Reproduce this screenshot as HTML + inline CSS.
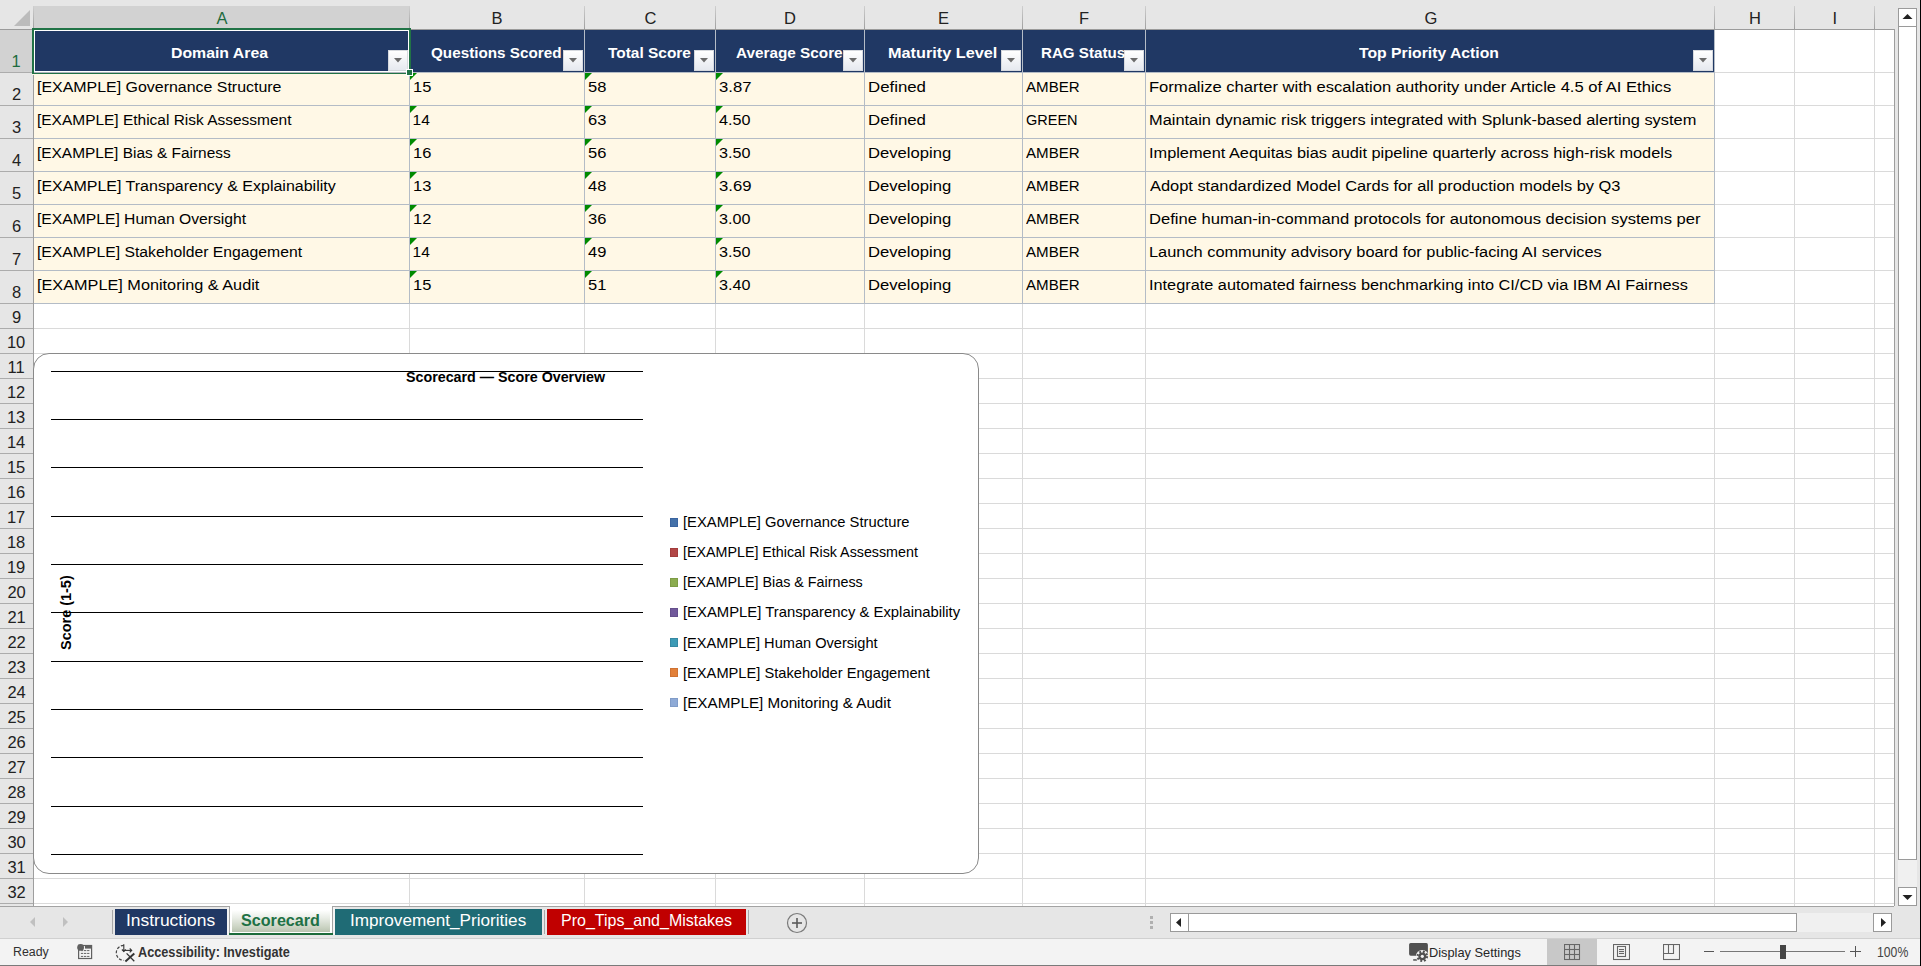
<!DOCTYPE html>
<html><head><meta charset="utf-8"><style>
html,body{margin:0;padding:0;width:1921px;height:966px;overflow:hidden;background:#fff;}
body{position:relative;font-family:"Liberation Sans", sans-serif;}
div{box-sizing:content-box;}
</style></head><body>
<div style="position:absolute;left:0px;top:0px;width:1921px;height:966px;background:#ffffff;"></div>
<div style="position:absolute;left:0px;top:0px;width:1921px;height:30px;background:#e6e6e6;"></div>
<div style="position:absolute;left:1894px;top:0px;width:27px;height:906px;background:#e6e6e6;"></div>
<div style="position:absolute;left:0px;top:29px;width:33px;height:877px;background:#e6e6e6;"></div>
<div style="position:absolute;left:34px;top:6px;width:375px;height:23px;background:#d2d2d2;"></div>
<div style="position:absolute;left:0px;top:30px;width:33px;height:42px;background:#d2d2d2;"></div>
<svg style="position:absolute;left:0;top:0" width="33" height="29"><polygon points="30,10 30,26 14,26" fill="#bcbcbc"/></svg>
<div style="position:absolute;left:409px;top:29px;width:1px;height:877px;background:#dadada;"></div>
<div style="position:absolute;left:584px;top:29px;width:1px;height:877px;background:#dadada;"></div>
<div style="position:absolute;left:715px;top:29px;width:1px;height:877px;background:#dadada;"></div>
<div style="position:absolute;left:864px;top:29px;width:1px;height:877px;background:#dadada;"></div>
<div style="position:absolute;left:1022px;top:29px;width:1px;height:877px;background:#dadada;"></div>
<div style="position:absolute;left:1145px;top:29px;width:1px;height:877px;background:#dadada;"></div>
<div style="position:absolute;left:1714px;top:29px;width:1px;height:877px;background:#dadada;"></div>
<div style="position:absolute;left:1794px;top:29px;width:1px;height:877px;background:#dadada;"></div>
<div style="position:absolute;left:1874px;top:29px;width:1px;height:877px;background:#dadada;"></div>
<div style="position:absolute;left:33px;top:328px;width:1861px;height:1px;background:#dadada;"></div>
<div style="position:absolute;left:33px;top:353px;width:1861px;height:1px;background:#dadada;"></div>
<div style="position:absolute;left:33px;top:378px;width:1861px;height:1px;background:#dadada;"></div>
<div style="position:absolute;left:33px;top:403px;width:1861px;height:1px;background:#dadada;"></div>
<div style="position:absolute;left:33px;top:428px;width:1861px;height:1px;background:#dadada;"></div>
<div style="position:absolute;left:33px;top:453px;width:1861px;height:1px;background:#dadada;"></div>
<div style="position:absolute;left:33px;top:478px;width:1861px;height:1px;background:#dadada;"></div>
<div style="position:absolute;left:33px;top:503px;width:1861px;height:1px;background:#dadada;"></div>
<div style="position:absolute;left:33px;top:528px;width:1861px;height:1px;background:#dadada;"></div>
<div style="position:absolute;left:33px;top:553px;width:1861px;height:1px;background:#dadada;"></div>
<div style="position:absolute;left:33px;top:578px;width:1861px;height:1px;background:#dadada;"></div>
<div style="position:absolute;left:33px;top:603px;width:1861px;height:1px;background:#dadada;"></div>
<div style="position:absolute;left:33px;top:628px;width:1861px;height:1px;background:#dadada;"></div>
<div style="position:absolute;left:33px;top:653px;width:1861px;height:1px;background:#dadada;"></div>
<div style="position:absolute;left:33px;top:678px;width:1861px;height:1px;background:#dadada;"></div>
<div style="position:absolute;left:33px;top:703px;width:1861px;height:1px;background:#dadada;"></div>
<div style="position:absolute;left:33px;top:728px;width:1861px;height:1px;background:#dadada;"></div>
<div style="position:absolute;left:33px;top:753px;width:1861px;height:1px;background:#dadada;"></div>
<div style="position:absolute;left:33px;top:778px;width:1861px;height:1px;background:#dadada;"></div>
<div style="position:absolute;left:33px;top:803px;width:1861px;height:1px;background:#dadada;"></div>
<div style="position:absolute;left:33px;top:828px;width:1861px;height:1px;background:#dadada;"></div>
<div style="position:absolute;left:33px;top:853px;width:1861px;height:1px;background:#dadada;"></div>
<div style="position:absolute;left:33px;top:878px;width:1861px;height:1px;background:#dadada;"></div>
<div style="position:absolute;left:33px;top:903px;width:1861px;height:1px;background:#dadada;"></div>
<div style="position:absolute;left:1714px;top:72px;width:180px;height:1px;background:#dadada;"></div>
<div style="position:absolute;left:1714px;top:105px;width:180px;height:1px;background:#dadada;"></div>
<div style="position:absolute;left:1714px;top:138px;width:180px;height:1px;background:#dadada;"></div>
<div style="position:absolute;left:1714px;top:171px;width:180px;height:1px;background:#dadada;"></div>
<div style="position:absolute;left:1714px;top:204px;width:180px;height:1px;background:#dadada;"></div>
<div style="position:absolute;left:1714px;top:237px;width:180px;height:1px;background:#dadada;"></div>
<div style="position:absolute;left:1714px;top:270px;width:180px;height:1px;background:#dadada;"></div>
<div style="position:absolute;left:1714px;top:303px;width:180px;height:1px;background:#dadada;"></div>
<div style="position:absolute;left:409px;top:6px;width:1px;height:23px;background:linear-gradient(#cfcfcf,#9f9f9f);"></div>
<div style="position:absolute;left:584px;top:6px;width:1px;height:23px;background:linear-gradient(#cfcfcf,#9f9f9f);"></div>
<div style="position:absolute;left:715px;top:6px;width:1px;height:23px;background:linear-gradient(#cfcfcf,#9f9f9f);"></div>
<div style="position:absolute;left:864px;top:6px;width:1px;height:23px;background:linear-gradient(#cfcfcf,#9f9f9f);"></div>
<div style="position:absolute;left:1022px;top:6px;width:1px;height:23px;background:linear-gradient(#cfcfcf,#9f9f9f);"></div>
<div style="position:absolute;left:1145px;top:6px;width:1px;height:23px;background:linear-gradient(#cfcfcf,#9f9f9f);"></div>
<div style="position:absolute;left:1714px;top:6px;width:1px;height:23px;background:linear-gradient(#cfcfcf,#9f9f9f);"></div>
<div style="position:absolute;left:1794px;top:6px;width:1px;height:23px;background:linear-gradient(#cfcfcf,#9f9f9f);"></div>
<div style="position:absolute;left:1874px;top:6px;width:1px;height:23px;background:linear-gradient(#cfcfcf,#9f9f9f);"></div>
<div style="position:absolute;left:33px;top:6px;width:1px;height:23px;background:linear-gradient(#cfcfcf,#9f9f9f);"></div>
<div style="position:absolute;left:0px;top:29px;width:1894px;height:1px;background:#9b9b9b;"></div>
<div style="position:absolute;left:33px;top:29px;width:1px;height:877px;background:#9e9e9e;"></div>
<div style="position:absolute;left:0px;top:72px;width:33px;height:1px;background:#acacac;"></div>
<div style="position:absolute;left:0px;top:105px;width:33px;height:1px;background:#acacac;"></div>
<div style="position:absolute;left:0px;top:138px;width:33px;height:1px;background:#acacac;"></div>
<div style="position:absolute;left:0px;top:171px;width:33px;height:1px;background:#acacac;"></div>
<div style="position:absolute;left:0px;top:204px;width:33px;height:1px;background:#acacac;"></div>
<div style="position:absolute;left:0px;top:237px;width:33px;height:1px;background:#acacac;"></div>
<div style="position:absolute;left:0px;top:270px;width:33px;height:1px;background:#acacac;"></div>
<div style="position:absolute;left:0px;top:303px;width:33px;height:1px;background:#acacac;"></div>
<div style="position:absolute;left:0px;top:328px;width:33px;height:1px;background:#acacac;"></div>
<div style="position:absolute;left:0px;top:353px;width:33px;height:1px;background:#acacac;"></div>
<div style="position:absolute;left:0px;top:378px;width:33px;height:1px;background:#acacac;"></div>
<div style="position:absolute;left:0px;top:403px;width:33px;height:1px;background:#acacac;"></div>
<div style="position:absolute;left:0px;top:428px;width:33px;height:1px;background:#acacac;"></div>
<div style="position:absolute;left:0px;top:453px;width:33px;height:1px;background:#acacac;"></div>
<div style="position:absolute;left:0px;top:478px;width:33px;height:1px;background:#acacac;"></div>
<div style="position:absolute;left:0px;top:503px;width:33px;height:1px;background:#acacac;"></div>
<div style="position:absolute;left:0px;top:528px;width:33px;height:1px;background:#acacac;"></div>
<div style="position:absolute;left:0px;top:553px;width:33px;height:1px;background:#acacac;"></div>
<div style="position:absolute;left:0px;top:578px;width:33px;height:1px;background:#acacac;"></div>
<div style="position:absolute;left:0px;top:603px;width:33px;height:1px;background:#acacac;"></div>
<div style="position:absolute;left:0px;top:628px;width:33px;height:1px;background:#acacac;"></div>
<div style="position:absolute;left:0px;top:653px;width:33px;height:1px;background:#acacac;"></div>
<div style="position:absolute;left:0px;top:678px;width:33px;height:1px;background:#acacac;"></div>
<div style="position:absolute;left:0px;top:703px;width:33px;height:1px;background:#acacac;"></div>
<div style="position:absolute;left:0px;top:728px;width:33px;height:1px;background:#acacac;"></div>
<div style="position:absolute;left:0px;top:753px;width:33px;height:1px;background:#acacac;"></div>
<div style="position:absolute;left:0px;top:778px;width:33px;height:1px;background:#acacac;"></div>
<div style="position:absolute;left:0px;top:803px;width:33px;height:1px;background:#acacac;"></div>
<div style="position:absolute;left:0px;top:828px;width:33px;height:1px;background:#acacac;"></div>
<div style="position:absolute;left:0px;top:853px;width:33px;height:1px;background:#acacac;"></div>
<div style="position:absolute;left:0px;top:878px;width:33px;height:1px;background:#acacac;"></div>
<div style="position:absolute;left:0px;top:903px;width:33px;height:1px;background:#acacac;"></div>
<div style="position:absolute;left:1894px;top:29px;width:1px;height:878px;background:#9e9e9e;"></div>
<div style="position:absolute;left:34px;top:30px;width:1680px;height:42px;background:#203864;"></div>
<div style="position:absolute;left:34px;top:73px;width:1680px;height:230px;background:#fff8e6;"></div>
<div style="position:absolute;left:34px;top:72px;width:1680px;height:1px;background:#b4bcc6;"></div>
<div style="position:absolute;left:34px;top:105px;width:1680px;height:1px;background:#b4bcc6;"></div>
<div style="position:absolute;left:34px;top:138px;width:1680px;height:1px;background:#b4bcc6;"></div>
<div style="position:absolute;left:34px;top:171px;width:1680px;height:1px;background:#b4bcc6;"></div>
<div style="position:absolute;left:34px;top:204px;width:1680px;height:1px;background:#b4bcc6;"></div>
<div style="position:absolute;left:34px;top:237px;width:1680px;height:1px;background:#b4bcc6;"></div>
<div style="position:absolute;left:34px;top:270px;width:1680px;height:1px;background:#b4bcc6;"></div>
<div style="position:absolute;left:34px;top:303px;width:1680px;height:1px;background:#b4bcc6;"></div>
<div style="position:absolute;left:409px;top:30px;width:1px;height:274px;background:#b4bcc6;"></div>
<div style="position:absolute;left:584px;top:30px;width:1px;height:274px;background:#b4bcc6;"></div>
<div style="position:absolute;left:715px;top:30px;width:1px;height:274px;background:#b4bcc6;"></div>
<div style="position:absolute;left:864px;top:30px;width:1px;height:274px;background:#b4bcc6;"></div>
<div style="position:absolute;left:1022px;top:30px;width:1px;height:274px;background:#b4bcc6;"></div>
<div style="position:absolute;left:1145px;top:30px;width:1px;height:274px;background:#b4bcc6;"></div>
<div style="position:absolute;left:1714px;top:30px;width:1px;height:274px;background:#b4bcc6;"></div>
<div style="position:absolute;left:388px;top:50px;width:18px;height:19px;border:1px solid #d6d9de;background:linear-gradient(#ffffff,#e6e9ef);"></div>
<svg style="position:absolute;left:394px;top:58px" width="8" height="5"><polygon points="0,0 8,0 4,4.5" fill="#6b6b6b"/></svg>
<div style="position:absolute;left:563px;top:50px;width:18px;height:19px;border:1px solid #d6d9de;background:linear-gradient(#ffffff,#e6e9ef);"></div>
<svg style="position:absolute;left:569px;top:58px" width="8" height="5"><polygon points="0,0 8,0 4,4.5" fill="#6b6b6b"/></svg>
<div style="position:absolute;left:694px;top:50px;width:18px;height:19px;border:1px solid #d6d9de;background:linear-gradient(#ffffff,#e6e9ef);"></div>
<svg style="position:absolute;left:700px;top:58px" width="8" height="5"><polygon points="0,0 8,0 4,4.5" fill="#6b6b6b"/></svg>
<div style="position:absolute;left:843px;top:50px;width:18px;height:19px;border:1px solid #d6d9de;background:linear-gradient(#ffffff,#e6e9ef);"></div>
<svg style="position:absolute;left:849px;top:58px" width="8" height="5"><polygon points="0,0 8,0 4,4.5" fill="#6b6b6b"/></svg>
<div style="position:absolute;left:1001px;top:50px;width:18px;height:19px;border:1px solid #d6d9de;background:linear-gradient(#ffffff,#e6e9ef);"></div>
<svg style="position:absolute;left:1007px;top:58px" width="8" height="5"><polygon points="0,0 8,0 4,4.5" fill="#6b6b6b"/></svg>
<div style="position:absolute;left:1124px;top:50px;width:18px;height:19px;border:1px solid #d6d9de;background:linear-gradient(#ffffff,#e6e9ef);"></div>
<svg style="position:absolute;left:1130px;top:58px" width="8" height="5"><polygon points="0,0 8,0 4,4.5" fill="#6b6b6b"/></svg>
<div style="position:absolute;left:1693px;top:50px;width:18px;height:19px;border:1px solid #d6d9de;background:linear-gradient(#ffffff,#e6e9ef);"></div>
<svg style="position:absolute;left:1699px;top:58px" width="8" height="5"><polygon points="0,0 8,0 4,4.5" fill="#6b6b6b"/></svg>
<svg style="position:absolute;left:410px;top:73px" width="7" height="7"><polygon points="0,0 7,0 0,7" fill="#008a00"/></svg>
<svg style="position:absolute;left:585px;top:73px" width="7" height="7"><polygon points="0,0 7,0 0,7" fill="#008a00"/></svg>
<svg style="position:absolute;left:716px;top:73px" width="7" height="7"><polygon points="0,0 7,0 0,7" fill="#008a00"/></svg>
<svg style="position:absolute;left:410px;top:106px" width="7" height="7"><polygon points="0,0 7,0 0,7" fill="#008a00"/></svg>
<svg style="position:absolute;left:585px;top:106px" width="7" height="7"><polygon points="0,0 7,0 0,7" fill="#008a00"/></svg>
<svg style="position:absolute;left:716px;top:106px" width="7" height="7"><polygon points="0,0 7,0 0,7" fill="#008a00"/></svg>
<svg style="position:absolute;left:410px;top:139px" width="7" height="7"><polygon points="0,0 7,0 0,7" fill="#008a00"/></svg>
<svg style="position:absolute;left:585px;top:139px" width="7" height="7"><polygon points="0,0 7,0 0,7" fill="#008a00"/></svg>
<svg style="position:absolute;left:716px;top:139px" width="7" height="7"><polygon points="0,0 7,0 0,7" fill="#008a00"/></svg>
<svg style="position:absolute;left:410px;top:172px" width="7" height="7"><polygon points="0,0 7,0 0,7" fill="#008a00"/></svg>
<svg style="position:absolute;left:585px;top:172px" width="7" height="7"><polygon points="0,0 7,0 0,7" fill="#008a00"/></svg>
<svg style="position:absolute;left:716px;top:172px" width="7" height="7"><polygon points="0,0 7,0 0,7" fill="#008a00"/></svg>
<svg style="position:absolute;left:410px;top:205px" width="7" height="7"><polygon points="0,0 7,0 0,7" fill="#008a00"/></svg>
<svg style="position:absolute;left:585px;top:205px" width="7" height="7"><polygon points="0,0 7,0 0,7" fill="#008a00"/></svg>
<svg style="position:absolute;left:716px;top:205px" width="7" height="7"><polygon points="0,0 7,0 0,7" fill="#008a00"/></svg>
<svg style="position:absolute;left:410px;top:238px" width="7" height="7"><polygon points="0,0 7,0 0,7" fill="#008a00"/></svg>
<svg style="position:absolute;left:585px;top:238px" width="7" height="7"><polygon points="0,0 7,0 0,7" fill="#008a00"/></svg>
<svg style="position:absolute;left:716px;top:238px" width="7" height="7"><polygon points="0,0 7,0 0,7" fill="#008a00"/></svg>
<svg style="position:absolute;left:410px;top:271px" width="7" height="7"><polygon points="0,0 7,0 0,7" fill="#008a00"/></svg>
<svg style="position:absolute;left:585px;top:271px" width="7" height="7"><polygon points="0,0 7,0 0,7" fill="#008a00"/></svg>
<svg style="position:absolute;left:716px;top:271px" width="7" height="7"><polygon points="0,0 7,0 0,7" fill="#008a00"/></svg>
<div style="position:absolute;left:32px;top:28px;width:375px;height:42px;border:2px solid #217346;"></div>
<div style="position:absolute;left:34px;top:30px;width:373px;height:40px;border:1px solid #ffffff;box-sizing:border-box;width:375px;height:42px;"></div>
<div style="position:absolute;left:34px;top:72px;width:375px;height:1px;background:#aeb4bb;"></div>
<div style="position:absolute;left:32px;top:73px;width:377px;height:1px;background:#217346;"></div>
<div style="position:absolute;left:32px;top:74px;width:377px;height:1px;background:#fff8e6;"></div>
<div style="position:absolute;left:406px;top:69px;width:5px;height:5px;background:#217346;border:1px solid #fff;"></div>
<div style="position:absolute;left:33px;top:353px;width:944px;height:519px;border:1.2px solid #8a8a8a;border-radius:16px;background:#fff;"></div>
<div style="position:absolute;left:51px;top:371px;width:592px;height:1px;background:#000000;"></div>
<div style="position:absolute;left:51px;top:419px;width:592px;height:1px;background:#000000;"></div>
<div style="position:absolute;left:51px;top:467px;width:592px;height:1px;background:#000000;"></div>
<div style="position:absolute;left:51px;top:516px;width:592px;height:1px;background:#000000;"></div>
<div style="position:absolute;left:51px;top:564px;width:592px;height:1px;background:#000000;"></div>
<div style="position:absolute;left:51px;top:612px;width:592px;height:1px;background:#000000;"></div>
<div style="position:absolute;left:51px;top:661px;width:592px;height:1px;background:#000000;"></div>
<div style="position:absolute;left:51px;top:709px;width:592px;height:1px;background:#000000;"></div>
<div style="position:absolute;left:51px;top:757px;width:592px;height:1px;background:#000000;"></div>
<div style="position:absolute;left:51px;top:806px;width:592px;height:1px;background:#000000;"></div>
<div style="position:absolute;left:51px;top:854px;width:592px;height:1px;background:#000000;"></div>
<div style="position:absolute;left:670px;top:518px;width:6px;height:7px;background:#4471a9;border:1px solid #3a64a0;"></div>
<div style="position:absolute;left:670px;top:548px;width:6px;height:7px;background:#b24646;border:1px solid #a23c3c;"></div>
<div style="position:absolute;left:670px;top:578px;width:6px;height:7px;background:#8bac50;border:1px solid #7d9c46;"></div>
<div style="position:absolute;left:670px;top:608px;width:6px;height:7px;background:#71599b;border:1px solid #654f8c;"></div>
<div style="position:absolute;left:670px;top:638px;width:6px;height:7px;background:#3d9bb6;border:1px solid #3689a3;"></div>
<div style="position:absolute;left:670px;top:668px;width:6px;height:7px;background:#e28039;border:1px solid #cf7232;"></div>
<div style="position:absolute;left:670px;top:698px;width:6px;height:7px;background:#8eaad6;border:1px solid #809cc8;"></div>
<div style="position:absolute;left:0px;top:906px;width:1921px;height:32px;background:#e6e6e6;"></div>
<div style="position:absolute;left:0px;top:906px;width:1894px;height:1px;background:#a3a3a3;"></div>
<div style="position:absolute;left:115px;top:909px;width:112px;height:26px;background:#203864;"></div>
<div style="position:absolute;left:335px;top:909px;width:207px;height:26px;background:#1f6b75;"></div>
<div style="position:absolute;left:547px;top:909px;width:199px;height:26px;background:#c00000;"></div>
<div style="position:absolute;left:229px;top:906px;width:104px;height:29px;background:#a3a3a3;"></div>
<div style="position:absolute;left:230px;top:906px;width:102px;height:29px;background:#ffffff;"></div>
<div style="position:absolute;left:232px;top:910px;width:98px;height:22px;background:linear-gradient(#ffffff,#e9ede6 35%,#c9d2c1 80%,#b9c3b0);"></div>
<div style="position:absolute;left:229px;top:933px;width:104px;height:2px;background:#1b6b3a;"></div>
<div style="position:absolute;left:333px;top:907px;width:2px;height:28px;background:#f4f4f4;"></div>
<div style="position:absolute;left:227px;top:907px;width:2px;height:28px;background:#f4f4f4;"></div>
<div style="position:absolute;left:112px;top:910px;width:1px;height:24px;background:#a8a8a8;"></div>
<div style="position:absolute;left:544px;top:910px;width:1px;height:24px;background:#a8a8a8;"></div>
<div style="position:absolute;left:748px;top:910px;width:1px;height:24px;background:#a8a8a8;"></div>
<svg style="position:absolute;left:25px;top:914px" width="50" height="16"><polygon points="10,3 10,13 5,8" fill="#c0c0c0"/><polygon points="38,3 38,13 43,8" fill="#c0c0c0"/></svg>
<svg style="position:absolute;left:785px;top:911px" width="24" height="24"><circle cx="12" cy="12" r="9.5" fill="none" stroke="#7a7a7a" stroke-width="1.2"/><line x1="7" y1="12" x2="17" y2="12" stroke="#5a5a5a" stroke-width="1.6"/><line x1="12" y1="7" x2="12" y2="17" stroke="#5a5a5a" stroke-width="1.6"/></svg>
<div style="position:absolute;left:1150px;top:916px;width:3px;height:3px;background:#b0b0b0;"></div>
<div style="position:absolute;left:1150px;top:921px;width:3px;height:3px;background:#b0b0b0;"></div>
<div style="position:absolute;left:1150px;top:926px;width:3px;height:3px;background:#b0b0b0;"></div>
<div style="position:absolute;left:1170px;top:913px;width:722px;height:19px;background:#f0f0f0;"></div>
<div style="position:absolute;left:1170px;top:913px;width:17px;height:17px;border:1px solid #9a9a9a;background:#fff;"></div>
<svg style="position:absolute;left:1170px;top:913px" width="19" height="19"><polygon points="11,5 11,14 6,9.5" fill="#222"/></svg>
<div style="position:absolute;left:1188px;top:913px;width:607px;height:17px;border:1px solid #9a9a9a;background:#fff;"></div>
<div style="position:absolute;left:1873px;top:913px;width:17px;height:17px;border:1px solid #9a9a9a;background:#fff;"></div>
<svg style="position:absolute;left:1873px;top:913px" width="19" height="19"><polygon points="8,5 8,14 13,9.5" fill="#222"/></svg>
<div style="position:absolute;left:1898px;top:8px;width:19px;height:898px;background:#f0f0f0;"></div>
<div style="position:absolute;left:1898px;top:8px;width:17px;height:17px;border:1px solid #9a9a9a;background:#fff;"></div>
<svg style="position:absolute;left:1898px;top:8px" width="19" height="19"><polygon points="4.5,11 14.5,11 9.5,6" fill="#222"/></svg>
<div style="position:absolute;left:1898px;top:26px;width:17px;height:832px;border:1px solid #9a9a9a;background:#fff;"></div>
<div style="position:absolute;left:1898px;top:887px;width:17px;height:17px;border:1px solid #9a9a9a;background:#fff;"></div>
<svg style="position:absolute;left:1898px;top:887px" width="19" height="19"><polygon points="4.5,8 14.5,8 9.5,13" fill="#222"/></svg>
<div style="position:absolute;left:0px;top:938px;width:1921px;height:28px;background:#f3f3f3;"></div>
<div style="position:absolute;left:0px;top:938px;width:1921px;height:1px;background:#d0d0d0;"></div>
<svg style="position:absolute;left:77px;top:944px" width="17" height="17"><rect x="1.6" y="1.5" width="13" height="13" fill="none" stroke="#606060" stroke-width="1.2"/><rect x="8" y="1" width="7" height="3.6" fill="#606060"/><circle cx="3.6" cy="3.4" r="3.4" fill="#606060"/><g fill="#707070"><rect x="3.9" y="6" width="2.3" height="1.1"/><rect x="7" y="6" width="2.3" height="1.1"/><rect x="10.1" y="6" width="2.3" height="1.1"/><rect x="3.9" y="8.9" width="2.3" height="1.1"/><rect x="7" y="8.9" width="2.3" height="1.1"/><rect x="10.1" y="8.9" width="2.3" height="1.1"/><rect x="3.9" y="11.9" width="2.3" height="1.1"/><rect x="7" y="11.9" width="2.3" height="1.1"/><rect x="10.1" y="11.9" width="2.3" height="1.1"/></g></svg>
<svg style="position:absolute;left:115px;top:943px" width="22" height="21"><path d="M8.8 2.3 A7.5 7.5 0 0 0 8.8 17.3" fill="none" stroke="#444" stroke-width="1.2" stroke-dasharray="3 1.6"/><g fill="none" stroke="#333" stroke-width="1.1"><line x1="8.8" y1="1.2" x2="8.8" y2="8.4"/><polyline points="6.9,6.5 8.8,8.5 10.7,6.5"/><line x1="8.8" y1="7.4" x2="16.6" y2="7.4"/><polyline points="14.7,5.5 16.7,7.4 14.7,9.3"/></g><line x1="10.4" y1="18.4" x2="19.3" y2="10.4" stroke="#333" stroke-width="2"/><line x1="11.6" y1="10.4" x2="19.3" y2="18.3" stroke="#333" stroke-width="1.3"/></svg>
<svg style="position:absolute;left:1409px;top:943px" width="21" height="21"><rect x="0.1" y="0.1" width="18.8" height="12.6" rx="1.6" fill="#505050"/><rect x="4.2" y="16.2" width="3.7" height="1.5" fill="#505050"/><circle cx="13.3" cy="13.3" r="6.4" fill="#f3f3f3"/><circle cx="13.3" cy="13.3" r="3.9" fill="#505050"/><circle cx="13.3" cy="13.3" r="4.7" fill="none" stroke="#505050" stroke-width="2.2" stroke-dasharray="1.85 1.84"/><circle cx="13.3" cy="13.3" r="1.6" fill="#f3f3f3"/></svg>
<div style="position:absolute;left:1547px;top:939px;width:50px;height:27px;background:#c8c8c8;"></div>
<svg style="position:absolute;left:1564px;top:944px" width="17" height="17"><g fill="none" stroke="#666" stroke-width="1.1"><rect x="0.5" y="0.5" width="15" height="15"/><line x1="5.5" y1="0" x2="5.5" y2="16"/><line x1="10.5" y1="0" x2="10.5" y2="16"/><line x1="0" y1="5.5" x2="16" y2="5.5"/><line x1="0" y1="10.5" x2="16" y2="10.5"/></g></svg>
<svg style="position:absolute;left:1613px;top:944px" width="17" height="17"><g fill="none" stroke="#666" stroke-width="1.1"><rect x="0.5" y="0.5" width="16" height="15"/><rect x="4.5" y="2.5" width="8" height="10"/><line x1="6" y1="5.5" x2="11" y2="5.5"/><line x1="6" y1="7.5" x2="11" y2="7.5"/><line x1="6" y1="9.5" x2="11" y2="9.5"/></g></svg>
<svg style="position:absolute;left:1663px;top:944px" width="17" height="17"><g fill="none" stroke="#666" stroke-width="1.1"><rect x="0.5" y="0.5" width="16" height="15"/><polyline points="0.5,9.5 10.5,9.5 10.5,0"/><line x1="5.5" y1="0" x2="5.5" y2="9.5"/></g></svg>
<div style="position:absolute;left:1704px;top:951px;width:10px;height:1px;background:#555;"></div>
<div style="position:absolute;left:1720px;top:951px;width:125px;height:1px;background:#777;"></div>
<div style="position:absolute;left:1780px;top:945px;width:6px;height:14px;background:#444;"></div>
<div style="position:absolute;left:1850px;top:951px;width:11px;height:1px;background:#555;"></div>
<div style="position:absolute;left:1855px;top:946px;width:1px;height:11px;background:#555;"></div>
<div style="position:absolute;left:0px;top:965px;width:1921px;height:1px;background:#7a7a7a;"></div>
<div style="position:absolute;left:1920px;top:0px;width:1px;height:966px;background:#000000;"></div>
<div style="position:absolute;left:171.48px;top:43.13px;font-size:15.5px;line-height:19px;font-weight:bold;color:#ffffff;white-space:pre;transform:scaleX(1.0212);transform-origin:0 0;">Domain Area</div>
<div style="position:absolute;left:431.30px;top:43.13px;font-size:15.5px;line-height:19px;font-weight:bold;color:#ffffff;white-space:pre;transform:scaleX(0.9835);transform-origin:0 0;">Questions Scored</div>
<div style="position:absolute;left:608.30px;top:43.13px;font-size:15.5px;line-height:19px;font-weight:bold;color:#ffffff;white-space:pre;transform:scaleX(0.9959);transform-origin:0 0;">Total Score</div>
<div style="position:absolute;left:736.00px;top:43.13px;font-size:15.5px;line-height:19px;font-weight:bold;color:#ffffff;white-space:pre;transform:scaleX(0.9874);transform-origin:0 0;">Average Score</div>
<div style="position:absolute;left:888.35px;top:43.13px;font-size:15.5px;line-height:19px;font-weight:bold;color:#ffffff;white-space:pre;transform:scaleX(1.0494);transform-origin:0 0;">Maturity Level</div>
<div style="position:absolute;left:1041.22px;top:43.13px;font-size:15.5px;line-height:19px;font-weight:bold;color:#ffffff;white-space:pre;transform:scaleX(0.9763);transform-origin:0 0;">RAG Status</div>
<div style="position:absolute;left:1359.20px;top:43.13px;font-size:15.5px;line-height:19px;font-weight:bold;color:#ffffff;white-space:pre;transform:scaleX(1.0154);transform-origin:0 0;">Top Priority Action</div>
<div style="position:absolute;left:36.77px;top:77.13px;font-size:15.5px;line-height:19px;font-weight:normal;color:#000;white-space:pre;transform:scaleX(1.0281);transform-origin:0 0;">[EXAMPLE] Governance Structure</div>
<div style="position:absolute;left:412.54px;top:77.13px;font-size:15.5px;line-height:19px;font-weight:normal;color:#000;white-space:pre;transform:scaleX(1.0627);transform-origin:0 0;">15</div>
<div style="position:absolute;left:588.20px;top:77.13px;font-size:15.5px;line-height:19px;font-weight:normal;color:#000;white-space:pre;transform:scaleX(1.0650);transform-origin:0 0;">58</div>
<div style="position:absolute;left:719.20px;top:77.13px;font-size:15.5px;line-height:19px;font-weight:normal;color:#000;white-space:pre;transform:scaleX(1.0762);transform-origin:0 0;">3.87</div>
<div style="position:absolute;left:867.52px;top:77.13px;font-size:15.5px;line-height:19px;font-weight:normal;color:#000;white-space:pre;transform:scaleX(1.0848);transform-origin:0 0;">Defined</div>
<div style="position:absolute;left:1026.40px;top:77.13px;font-size:15.5px;line-height:19px;font-weight:normal;color:#000;white-space:pre;transform:scaleX(0.9740);transform-origin:0 0;">AMBER</div>
<div style="position:absolute;left:1148.63px;top:77.13px;font-size:15.5px;line-height:19px;font-weight:normal;color:#000;white-space:pre;transform:scaleX(1.0690);transform-origin:0 0;">Formalize charter with escalation authority under Article 4.5 of AI Ethics</div>
<div style="position:absolute;left:36.80px;top:110.13px;font-size:15.5px;line-height:19px;font-weight:normal;color:#000;white-space:pre;transform:scaleX(0.9979);transform-origin:0 0;">[EXAMPLE] Ethical Risk Assessment</div>
<div style="position:absolute;left:412.60px;top:110.13px;font-size:15.5px;line-height:19px;font-weight:normal;color:#000;white-space:pre;">14</div>
<div style="position:absolute;left:588.20px;top:110.13px;font-size:15.5px;line-height:19px;font-weight:normal;color:#000;white-space:pre;transform:scaleX(1.0650);transform-origin:0 0;">63</div>
<div style="position:absolute;left:719.20px;top:110.13px;font-size:15.5px;line-height:19px;font-weight:normal;color:#000;white-space:pre;transform:scaleX(1.0410);transform-origin:0 0;">4.50</div>
<div style="position:absolute;left:867.52px;top:110.13px;font-size:15.5px;line-height:19px;font-weight:normal;color:#000;white-space:pre;transform:scaleX(1.0848);transform-origin:0 0;">Defined</div>
<div style="position:absolute;left:1026.40px;top:110.13px;font-size:15.5px;line-height:19px;font-weight:normal;color:#000;white-space:pre;transform:scaleX(0.9346);transform-origin:0 0;">GREEN</div>
<div style="position:absolute;left:1148.64px;top:110.13px;font-size:15.5px;line-height:19px;font-weight:normal;color:#000;white-space:pre;transform:scaleX(1.0571);transform-origin:0 0;">Maintain dynamic risk triggers integrated with Splunk-based alerting system</div>
<div style="position:absolute;left:36.81px;top:143.13px;font-size:15.5px;line-height:19px;font-weight:normal;color:#000;white-space:pre;transform:scaleX(0.9947);transform-origin:0 0;">[EXAMPLE] Bias &amp; Fairness</div>
<div style="position:absolute;left:412.54px;top:143.13px;font-size:15.5px;line-height:19px;font-weight:normal;color:#000;white-space:pre;transform:scaleX(1.0627);transform-origin:0 0;">16</div>
<div style="position:absolute;left:588.20px;top:143.13px;font-size:15.5px;line-height:19px;font-weight:normal;color:#000;white-space:pre;transform:scaleX(1.0650);transform-origin:0 0;">56</div>
<div style="position:absolute;left:719.20px;top:143.13px;font-size:15.5px;line-height:19px;font-weight:normal;color:#000;white-space:pre;transform:scaleX(1.0410);transform-origin:0 0;">3.50</div>
<div style="position:absolute;left:867.53px;top:143.13px;font-size:15.5px;line-height:19px;font-weight:normal;color:#000;white-space:pre;transform:scaleX(1.0720);transform-origin:0 0;">Developing</div>
<div style="position:absolute;left:1026.40px;top:143.13px;font-size:15.5px;line-height:19px;font-weight:normal;color:#000;white-space:pre;transform:scaleX(0.9740);transform-origin:0 0;">AMBER</div>
<div style="position:absolute;left:1148.65px;top:143.13px;font-size:15.5px;line-height:19px;font-weight:normal;color:#000;white-space:pre;transform:scaleX(1.0541);transform-origin:0 0;">Implement Aequitas bias audit pipeline quarterly across high-risk models</div>
<div style="position:absolute;left:36.77px;top:176.13px;font-size:15.5px;line-height:19px;font-weight:normal;color:#000;white-space:pre;transform:scaleX(1.0318);transform-origin:0 0;">[EXAMPLE] Transparency &amp; Explainability</div>
<div style="position:absolute;left:412.54px;top:176.13px;font-size:15.5px;line-height:19px;font-weight:normal;color:#000;white-space:pre;transform:scaleX(1.0627);transform-origin:0 0;">13</div>
<div style="position:absolute;left:588.20px;top:176.13px;font-size:15.5px;line-height:19px;font-weight:normal;color:#000;white-space:pre;transform:scaleX(1.0650);transform-origin:0 0;">48</div>
<div style="position:absolute;left:719.20px;top:176.13px;font-size:15.5px;line-height:19px;font-weight:normal;color:#000;white-space:pre;transform:scaleX(1.0762);transform-origin:0 0;">3.69</div>
<div style="position:absolute;left:867.53px;top:176.13px;font-size:15.5px;line-height:19px;font-weight:normal;color:#000;white-space:pre;transform:scaleX(1.0720);transform-origin:0 0;">Developing</div>
<div style="position:absolute;left:1026.40px;top:176.13px;font-size:15.5px;line-height:19px;font-weight:normal;color:#000;white-space:pre;transform:scaleX(0.9740);transform-origin:0 0;">AMBER</div>
<div style="position:absolute;left:1149.70px;top:176.13px;font-size:15.5px;line-height:19px;font-weight:normal;color:#000;white-space:pre;transform:scaleX(1.0582);transform-origin:0 0;">Adopt standardized Model Cards for all production models by Q3</div>
<div style="position:absolute;left:36.79px;top:209.13px;font-size:15.5px;line-height:19px;font-weight:normal;color:#000;white-space:pre;transform:scaleX(1.0110);transform-origin:0 0;">[EXAMPLE] Human Oversight</div>
<div style="position:absolute;left:412.54px;top:209.13px;font-size:15.5px;line-height:19px;font-weight:normal;color:#000;white-space:pre;transform:scaleX(1.0627);transform-origin:0 0;">12</div>
<div style="position:absolute;left:588.20px;top:209.13px;font-size:15.5px;line-height:19px;font-weight:normal;color:#000;white-space:pre;transform:scaleX(1.0650);transform-origin:0 0;">36</div>
<div style="position:absolute;left:719.20px;top:209.13px;font-size:15.5px;line-height:19px;font-weight:normal;color:#000;white-space:pre;transform:scaleX(1.0410);transform-origin:0 0;">3.00</div>
<div style="position:absolute;left:867.53px;top:209.13px;font-size:15.5px;line-height:19px;font-weight:normal;color:#000;white-space:pre;transform:scaleX(1.0720);transform-origin:0 0;">Developing</div>
<div style="position:absolute;left:1026.40px;top:209.13px;font-size:15.5px;line-height:19px;font-weight:normal;color:#000;white-space:pre;transform:scaleX(0.9740);transform-origin:0 0;">AMBER</div>
<div style="position:absolute;left:1148.63px;top:209.13px;font-size:15.5px;line-height:19px;font-weight:normal;color:#000;white-space:pre;transform:scaleX(1.0706);transform-origin:0 0;">Define human-in-command protocols for autonomous decision systems per</div>
<div style="position:absolute;left:36.78px;top:242.13px;font-size:15.5px;line-height:19px;font-weight:normal;color:#000;white-space:pre;transform:scaleX(1.0151);transform-origin:0 0;">[EXAMPLE] Stakeholder Engagement</div>
<div style="position:absolute;left:412.60px;top:242.13px;font-size:15.5px;line-height:19px;font-weight:normal;color:#000;white-space:pre;">14</div>
<div style="position:absolute;left:588.20px;top:242.13px;font-size:15.5px;line-height:19px;font-weight:normal;color:#000;white-space:pre;transform:scaleX(1.0650);transform-origin:0 0;">49</div>
<div style="position:absolute;left:719.20px;top:242.13px;font-size:15.5px;line-height:19px;font-weight:normal;color:#000;white-space:pre;transform:scaleX(1.0410);transform-origin:0 0;">3.50</div>
<div style="position:absolute;left:867.53px;top:242.13px;font-size:15.5px;line-height:19px;font-weight:normal;color:#000;white-space:pre;transform:scaleX(1.0720);transform-origin:0 0;">Developing</div>
<div style="position:absolute;left:1026.40px;top:242.13px;font-size:15.5px;line-height:19px;font-weight:normal;color:#000;white-space:pre;transform:scaleX(0.9740);transform-origin:0 0;">AMBER</div>
<div style="position:absolute;left:1148.64px;top:242.13px;font-size:15.5px;line-height:19px;font-weight:normal;color:#000;white-space:pre;transform:scaleX(1.0554);transform-origin:0 0;">Launch community advisory board for public-facing AI services</div>
<div style="position:absolute;left:36.75px;top:275.13px;font-size:15.5px;line-height:19px;font-weight:normal;color:#000;white-space:pre;transform:scaleX(1.0490);transform-origin:0 0;">[EXAMPLE] Monitoring &amp; Audit</div>
<div style="position:absolute;left:412.54px;top:275.13px;font-size:15.5px;line-height:19px;font-weight:normal;color:#000;white-space:pre;transform:scaleX(1.0627);transform-origin:0 0;">15</div>
<div style="position:absolute;left:588.20px;top:275.13px;font-size:15.5px;line-height:19px;font-weight:normal;color:#000;white-space:pre;transform:scaleX(1.0650);transform-origin:0 0;">51</div>
<div style="position:absolute;left:719.20px;top:275.13px;font-size:15.5px;line-height:19px;font-weight:normal;color:#000;white-space:pre;transform:scaleX(1.0410);transform-origin:0 0;">3.40</div>
<div style="position:absolute;left:867.53px;top:275.13px;font-size:15.5px;line-height:19px;font-weight:normal;color:#000;white-space:pre;transform:scaleX(1.0720);transform-origin:0 0;">Developing</div>
<div style="position:absolute;left:1026.40px;top:275.13px;font-size:15.5px;line-height:19px;font-weight:normal;color:#000;white-space:pre;transform:scaleX(0.9740);transform-origin:0 0;">AMBER</div>
<div style="position:absolute;left:1148.65px;top:275.13px;font-size:15.5px;line-height:19px;font-weight:normal;color:#000;white-space:pre;transform:scaleX(1.0511);transform-origin:0 0;">Integrate automated fairness benchmarking into CI/CD via IBM AI Fairness</div>
<div style="position:absolute;left:216.50px;top:8.28px;font-size:16.5px;line-height:20px;font-weight:normal;color:#1e6b3f;white-space:pre;">A</div>
<div style="position:absolute;left:491.50px;top:8.28px;font-size:16.5px;line-height:20px;font-weight:normal;color:#222222;white-space:pre;">B</div>
<div style="position:absolute;left:644.50px;top:8.28px;font-size:16.5px;line-height:20px;font-weight:normal;color:#222222;white-space:pre;">C</div>
<div style="position:absolute;left:784.00px;top:8.28px;font-size:16.5px;line-height:20px;font-weight:normal;color:#222222;white-space:pre;">D</div>
<div style="position:absolute;left:938.00px;top:8.28px;font-size:16.5px;line-height:20px;font-weight:normal;color:#222222;white-space:pre;">E</div>
<div style="position:absolute;left:1079.00px;top:8.28px;font-size:16.5px;line-height:20px;font-weight:normal;color:#222222;white-space:pre;">F</div>
<div style="position:absolute;left:1424.50px;top:8.28px;font-size:16.5px;line-height:20px;font-weight:normal;color:#222222;white-space:pre;">G</div>
<div style="position:absolute;left:1749.00px;top:8.28px;font-size:16.5px;line-height:20px;font-weight:normal;color:#222222;white-space:pre;">H</div>
<div style="position:absolute;left:1832.50px;top:8.28px;font-size:16.5px;line-height:20px;font-weight:normal;color:#222222;white-space:pre;">I</div>
<div style="position:absolute;left:11.50px;top:51.28px;font-size:16.5px;line-height:20px;font-weight:normal;color:#1e6b3f;white-space:pre;">1</div>
<div style="position:absolute;left:12.00px;top:84.28px;font-size:16.5px;line-height:20px;font-weight:normal;color:#222222;white-space:pre;">2</div>
<div style="position:absolute;left:12.00px;top:117.28px;font-size:16.5px;line-height:20px;font-weight:normal;color:#222222;white-space:pre;">3</div>
<div style="position:absolute;left:12.00px;top:150.28px;font-size:16.5px;line-height:20px;font-weight:normal;color:#222222;white-space:pre;">4</div>
<div style="position:absolute;left:12.00px;top:183.28px;font-size:16.5px;line-height:20px;font-weight:normal;color:#222222;white-space:pre;">5</div>
<div style="position:absolute;left:12.00px;top:216.28px;font-size:16.5px;line-height:20px;font-weight:normal;color:#222222;white-space:pre;">6</div>
<div style="position:absolute;left:12.00px;top:249.28px;font-size:16.5px;line-height:20px;font-weight:normal;color:#222222;white-space:pre;">7</div>
<div style="position:absolute;left:12.00px;top:282.28px;font-size:16.5px;line-height:20px;font-weight:normal;color:#222222;white-space:pre;">8</div>
<div style="position:absolute;left:12.00px;top:307.28px;font-size:16.5px;line-height:20px;font-weight:normal;color:#222222;white-space:pre;">9</div>
<div style="position:absolute;left:6.91px;top:332.28px;font-size:16.5px;line-height:20px;font-weight:normal;color:#222222;white-space:pre;">10</div>
<div style="position:absolute;left:7.52px;top:357.28px;font-size:16.5px;line-height:20px;font-weight:normal;color:#222222;white-space:pre;">11</div>
<div style="position:absolute;left:6.91px;top:382.28px;font-size:16.5px;line-height:20px;font-weight:normal;color:#222222;white-space:pre;">12</div>
<div style="position:absolute;left:6.91px;top:407.28px;font-size:16.5px;line-height:20px;font-weight:normal;color:#222222;white-space:pre;">13</div>
<div style="position:absolute;left:6.91px;top:432.28px;font-size:16.5px;line-height:20px;font-weight:normal;color:#222222;white-space:pre;">14</div>
<div style="position:absolute;left:6.91px;top:457.28px;font-size:16.5px;line-height:20px;font-weight:normal;color:#222222;white-space:pre;">15</div>
<div style="position:absolute;left:6.91px;top:482.28px;font-size:16.5px;line-height:20px;font-weight:normal;color:#222222;white-space:pre;">16</div>
<div style="position:absolute;left:6.91px;top:507.28px;font-size:16.5px;line-height:20px;font-weight:normal;color:#222222;white-space:pre;">17</div>
<div style="position:absolute;left:6.91px;top:532.28px;font-size:16.5px;line-height:20px;font-weight:normal;color:#222222;white-space:pre;">18</div>
<div style="position:absolute;left:6.91px;top:557.28px;font-size:16.5px;line-height:20px;font-weight:normal;color:#222222;white-space:pre;">19</div>
<div style="position:absolute;left:7.41px;top:582.28px;font-size:16.5px;line-height:20px;font-weight:normal;color:#222222;white-space:pre;">20</div>
<div style="position:absolute;left:7.41px;top:607.28px;font-size:16.5px;line-height:20px;font-weight:normal;color:#222222;white-space:pre;">21</div>
<div style="position:absolute;left:7.41px;top:632.28px;font-size:16.5px;line-height:20px;font-weight:normal;color:#222222;white-space:pre;">22</div>
<div style="position:absolute;left:7.41px;top:657.28px;font-size:16.5px;line-height:20px;font-weight:normal;color:#222222;white-space:pre;">23</div>
<div style="position:absolute;left:7.41px;top:682.28px;font-size:16.5px;line-height:20px;font-weight:normal;color:#222222;white-space:pre;">24</div>
<div style="position:absolute;left:7.41px;top:707.28px;font-size:16.5px;line-height:20px;font-weight:normal;color:#222222;white-space:pre;">25</div>
<div style="position:absolute;left:7.41px;top:732.28px;font-size:16.5px;line-height:20px;font-weight:normal;color:#222222;white-space:pre;">26</div>
<div style="position:absolute;left:7.41px;top:757.28px;font-size:16.5px;line-height:20px;font-weight:normal;color:#222222;white-space:pre;">27</div>
<div style="position:absolute;left:7.41px;top:782.28px;font-size:16.5px;line-height:20px;font-weight:normal;color:#222222;white-space:pre;">28</div>
<div style="position:absolute;left:7.41px;top:807.28px;font-size:16.5px;line-height:20px;font-weight:normal;color:#222222;white-space:pre;">29</div>
<div style="position:absolute;left:7.41px;top:832.28px;font-size:16.5px;line-height:20px;font-weight:normal;color:#222222;white-space:pre;">30</div>
<div style="position:absolute;left:7.41px;top:857.28px;font-size:16.5px;line-height:20px;font-weight:normal;color:#222222;white-space:pre;">31</div>
<div style="position:absolute;left:7.41px;top:882.28px;font-size:16.5px;line-height:20px;font-weight:normal;color:#222222;white-space:pre;">32</div>
<div style="position:absolute;left:405.80px;top:368.65px;font-size:14px;line-height:17px;font-weight:bold;color:#000;white-space:pre;transform:scaleX(1.0193);transform-origin:0 0;">Scorecard — Score Overview</div>
<div style="position:absolute;left:683.22px;top:513.10px;font-size:15px;line-height:18px;font-weight:normal;color:#000;white-space:pre;transform:scaleX(0.9844);transform-origin:0 0;">[EXAMPLE] Governance Structure</div>
<div style="position:absolute;left:683.25px;top:543.20px;font-size:15px;line-height:18px;font-weight:normal;color:#000;white-space:pre;transform:scaleX(0.9518);transform-origin:0 0;">[EXAMPLE] Ethical Risk Assessment</div>
<div style="position:absolute;left:683.25px;top:573.30px;font-size:15px;line-height:18px;font-weight:normal;color:#000;white-space:pre;transform:scaleX(0.9540);transform-origin:0 0;">[EXAMPLE] Bias &amp; Fairness</div>
<div style="position:absolute;left:683.21px;top:603.40px;font-size:15px;line-height:18px;font-weight:normal;color:#000;white-space:pre;transform:scaleX(0.9893);transform-origin:0 0;">[EXAMPLE] Transparency &amp; Explainability</div>
<div style="position:absolute;left:683.23px;top:633.50px;font-size:15px;line-height:18px;font-weight:normal;color:#000;white-space:pre;transform:scaleX(0.9729);transform-origin:0 0;">[EXAMPLE] Human Oversight</div>
<div style="position:absolute;left:683.22px;top:663.60px;font-size:15px;line-height:18px;font-weight:normal;color:#000;white-space:pre;transform:scaleX(0.9767);transform-origin:0 0;">[EXAMPLE] Stakeholder Engagement</div>
<div style="position:absolute;left:683.19px;top:693.70px;font-size:15px;line-height:18px;font-weight:normal;color:#000;white-space:pre;transform:scaleX(1.0138);transform-origin:0 0;">[EXAMPLE] Monitoring &amp; Audit</div>
<div style="position:absolute;left:125.94px;top:910.28px;font-size:16.5px;line-height:20px;font-weight:normal;color:#ffffff;white-space:pre;transform:scaleX(1.0563);transform-origin:0 0;">Instructions</div>
<div style="position:absolute;left:349.96px;top:910.28px;font-size:16.5px;line-height:20px;font-weight:normal;color:#ffffff;white-space:pre;transform:scaleX(1.0387);transform-origin:0 0;">Improvement_Priorities</div>
<div style="position:absolute;left:560.63px;top:910.28px;font-size:16.5px;line-height:20px;font-weight:normal;color:#ffffff;white-space:pre;transform:scaleX(0.9695);transform-origin:0 0;">Pro_Tips_and_Mistakes</div>
<div style="position:absolute;left:241.40px;top:910.28px;font-size:16.5px;line-height:20px;font-weight:bold;color:#1e7145;white-space:pre;transform:scaleX(0.9782);transform-origin:0 0;">Scorecard</div>
<div style="position:absolute;left:13.46px;top:945.17px;font-size:12.5px;line-height:15px;font-weight:normal;color:#303030;white-space:pre;transform:scaleX(0.9893);transform-origin:0 0;">Ready</div>
<div style="position:absolute;left:138.00px;top:943.65px;font-size:14px;line-height:17px;font-weight:bold;color:#333333;white-space:pre;transform:scaleX(0.9074);transform-origin:0 0;">Accessibility: Investigate</div>
<div style="position:absolute;left:1429.42px;top:944.50px;font-size:13px;line-height:16px;font-weight:normal;color:#262626;white-space:pre;transform:scaleX(0.9848);transform-origin:0 0;">Display Settings</div>
<div style="position:absolute;left:1877.13px;top:943.65px;font-size:14px;line-height:17px;font-weight:normal;color:#444444;white-space:pre;transform:scaleX(0.8731);transform-origin:0 0;">100%</div>
<div style="position:absolute;left:65.6px;top:612.6px;width:0;height:0;"><div style="position:absolute;left:0;top:0;transform:rotate(-90deg) scaleX(1.0321);transform-origin:0 0;"><div style="position:absolute;left:-35.85px;top:-8.5px;font-size:14px;line-height:17px;font-weight:bold;white-space:pre;">Score (1-5)</div></div></div>
</body></html>
